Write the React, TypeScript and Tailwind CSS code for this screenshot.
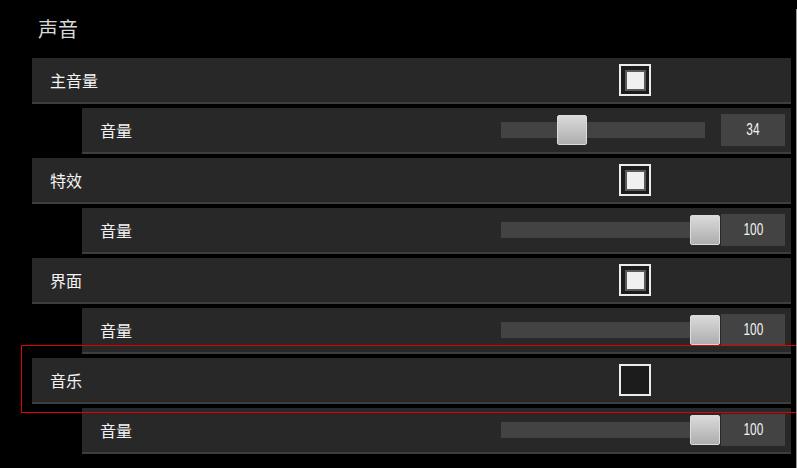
import React from 'react';

type Group = {
  label: string;
  enabled: boolean;
  volume: number;
  thumbLeft: number;
};

const groups: Group[] = [
  { label: '主音量', enabled: true, volume: 34, thumbLeft: 56 },
  { label: '特效', enabled: true, volume: 100, thumbLeft: 189 },
  { label: '界面', enabled: true, volume: 100, thumbLeft: 189 },
  { label: '音乐', enabled: false, volume: 100, thumbLeft: 189 },
];

const cjk = { fontFamily: '"Noto Sans CJK SC", "Noto Sans", sans-serif' };
const digits = { fontFamily: '"Liberation Sans", Arial, sans-serif' };

function Checkbox({ checked }: { checked: boolean }) {
  return (
    <div className="w-[32px] h-[32px] border-2 border-[#ececec] bg-[#1c1c1c] flex items-center justify-center">
      {checked && <div className="w-[21px] h-[21px] bg-[#f0f0f0] border-2 border-[#5a5a5a]" />}
    </div>
  );
}

function Slider({ value, thumbLeft }: { value: number; thumbLeft: number }) {
  return (
    <div className="flex items-center">
      <div className="relative w-[204px] h-[30px] flex items-center">
        <div className="w-full h-[16px] bg-[#434343]" />
        <div
          className="absolute top-0 w-[30px] h-[30px] rounded-[2px] border border-[#dcdcdc] bg-gradient-to-b from-[#dadada] to-[#aeaeae]"
          style={{ left: thumbLeft }}
        />
      </div>
      <div className="ml-[16px] w-[64px] h-[32px] bg-[#434343] text-[#f2f2f2] text-[16px] flex items-center justify-center">
        <span className="inline-block scale-x-[0.74]" style={digits}>
          {value}
        </span>
      </div>
    </div>
  );
}

export default function App() {
  return (
    <div className="relative w-[797px] h-[468px] bg-black overflow-hidden" style={cjk}>
      <div className="h-[58px] pl-[38px] pt-[17px] text-[20px] leading-[24px] text-[#d8d8d8]">声音</div>
      <div className="flex flex-col gap-[4px] pl-[32px] pr-[6px]">
        {groups.map((g) => (
          <React.Fragment key={g.label}>
            <div className="h-[46px] bg-[#282828] border-b-2 border-[#3e3e3e] flex items-center">
              <span className="w-[587px] pl-[18px] text-[16px] text-[#f4f4f4]">{g.label}</span>
              <Checkbox checked={g.enabled} />
            </div>
            <div className="ml-[50px] h-[46px] bg-[#282828] border-b-2 border-[#3e3e3e] flex items-center pr-[6px]">
              <span className="flex-1 pl-[18px] text-[16px] text-[#f4f4f4]">音量</span>
              <Slider value={g.volume} thumbLeft={g.thumbLeft} />
            </div>
          </React.Fragment>
        ))}
      </div>
      <div className="absolute left-[21px] top-[345px] w-[776px] h-[68px] border border-[#e40000]" />
      <div className="absolute right-0 top-[9px] bottom-0 w-px bg-[#9a9a9a]" />
    </div>
  );
}
